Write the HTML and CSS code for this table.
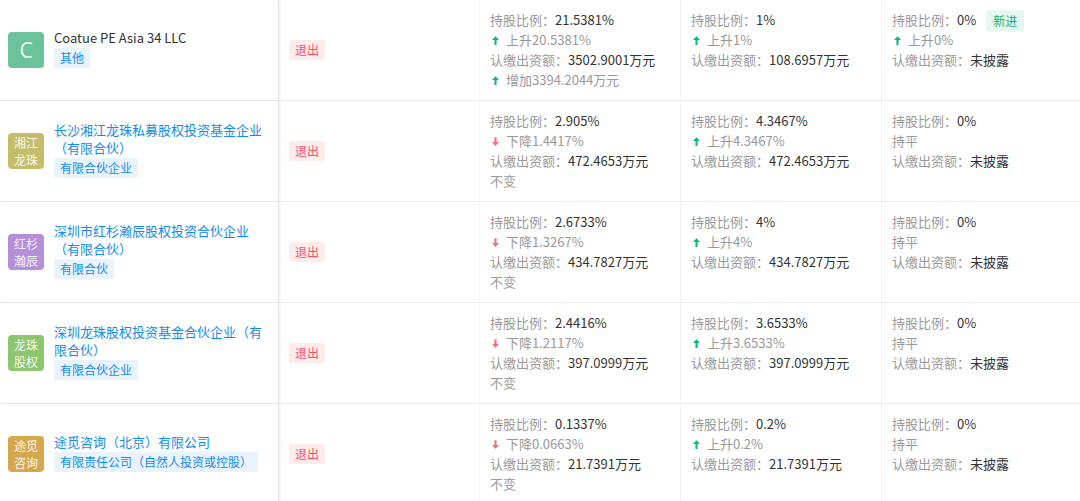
FILE: index.html
```html
<!DOCTYPE html>
<html lang="zh">
<head>
<meta charset="utf-8">
<link rel="stylesheet" href="styles.css">
</head>
<body>
<div class="table">

  <div class="row">
    <div class="cell name-cell">
      <div class="avatar av-c letter">C</div>
      <div class="name-info">
        <div class="name dark">Coatue PE Asia 34 LLC</div>
        <span class="tag">其他</span>
      </div>
    </div>
    <div class="cell status-cell"><span class="exit">退出</span></div>
    <div class="cell data">
      <div class="line"><span class="lbl">持股比例：</span><span class="val">21.5381%</span></div>
      <div class="line sub"><svg class="arr up" viewBox="0 0 8 10"><path d="M4 0 L8 4.5 H5.2 V10 H2.8 V4.5 H0 Z"/></svg>上升20.5381%</div>
      <div class="line"><span class="lbl">认缴出资额：</span><span class="val">3502.9001万元</span></div>
      <div class="line sub"><svg class="arr up" viewBox="0 0 8 10"><path d="M4 0 L8 4.5 H5.2 V10 H2.8 V4.5 H0 Z"/></svg>增加3394.2044万元</div>
    </div>
    <div class="cell data">
      <div class="line"><span class="lbl">持股比例：</span><span class="val">1%</span></div>
      <div class="line sub"><svg class="arr up" viewBox="0 0 8 10"><path d="M4 0 L8 4.5 H5.2 V10 H2.8 V4.5 H0 Z"/></svg>上升1%</div>
      <div class="line"><span class="lbl">认缴出资额：</span><span class="val">108.6957万元</span></div>
    </div>
    <div class="cell data">
      <div class="line"><span class="lbl">持股比例：</span><span class="val">0%</span><span class="new">新进</span></div>
      <div class="line sub"><svg class="arr up" viewBox="0 0 8 10"><path d="M4 0 L8 4.5 H5.2 V10 H2.8 V4.5 H0 Z"/></svg>上升0%</div>
      <div class="line"><span class="lbl">认缴出资额：</span><span class="val">未披露</span></div>
    </div>
  </div>

  <div class="row">
    <div class="cell name-cell">
      <div class="avatar av-olive"><span class="av-l">湘江</span><span class="av-l">龙珠</span></div>
      <div class="name-info">
        <div class="name">长沙湘江龙珠私募股权投资基金企业（有限合伙）</div>
        <span class="tag">有限合伙企业</span>
      </div>
    </div>
    <div class="cell status-cell"><span class="exit">退出</span></div>
    <div class="cell data">
      <div class="line"><span class="lbl">持股比例：</span><span class="val">2.905%</span></div>
      <div class="line sub"><svg class="arr down" viewBox="0 0 8 10"><path d="M4 10 L8 5.5 H5.2 V0 H2.8 V5.5 H0 Z"/></svg>下降1.4417%</div>
      <div class="line"><span class="lbl">认缴出资额：</span><span class="val">472.4653万元</span></div>
      <div class="line sub">不变</div>
    </div>
    <div class="cell data">
      <div class="line"><span class="lbl">持股比例：</span><span class="val">4.3467%</span></div>
      <div class="line sub"><svg class="arr up" viewBox="0 0 8 10"><path d="M4 0 L8 4.5 H5.2 V10 H2.8 V4.5 H0 Z"/></svg>上升4.3467%</div>
      <div class="line"><span class="lbl">认缴出资额：</span><span class="val">472.4653万元</span></div>
    </div>
    <div class="cell data">
      <div class="line"><span class="lbl">持股比例：</span><span class="val">0%</span></div>
      <div class="line sub">持平</div>
      <div class="line"><span class="lbl">认缴出资额：</span><span class="val">未披露</span></div>
    </div>
  </div>

  <div class="row">
    <div class="cell name-cell">
      <div class="avatar av-purple"><span class="av-l">红杉</span><span class="av-l">瀚辰</span></div>
      <div class="name-info">
        <div class="name">深圳市红杉瀚辰股权投资合伙企业（有限合伙）</div>
        <span class="tag">有限合伙</span>
      </div>
    </div>
    <div class="cell status-cell"><span class="exit">退出</span></div>
    <div class="cell data">
      <div class="line"><span class="lbl">持股比例：</span><span class="val">2.6733%</span></div>
      <div class="line sub"><svg class="arr down" viewBox="0 0 8 10"><path d="M4 10 L8 5.5 H5.2 V0 H2.8 V5.5 H0 Z"/></svg>下降1.3267%</div>
      <div class="line"><span class="lbl">认缴出资额：</span><span class="val">434.7827万元</span></div>
      <div class="line sub">不变</div>
    </div>
    <div class="cell data">
      <div class="line"><span class="lbl">持股比例：</span><span class="val">4%</span></div>
      <div class="line sub"><svg class="arr up" viewBox="0 0 8 10"><path d="M4 0 L8 4.5 H5.2 V10 H2.8 V4.5 H0 Z"/></svg>上升4%</div>
      <div class="line"><span class="lbl">认缴出资额：</span><span class="val">434.7827万元</span></div>
    </div>
    <div class="cell data">
      <div class="line"><span class="lbl">持股比例：</span><span class="val">0%</span></div>
      <div class="line sub">持平</div>
      <div class="line"><span class="lbl">认缴出资额：</span><span class="val">未披露</span></div>
    </div>
  </div>

  <div class="row">
    <div class="cell name-cell">
      <div class="avatar av-green"><span class="av-l">龙珠</span><span class="av-l">股权</span></div>
      <div class="name-info">
        <div class="name">深圳龙珠股权投资基金合伙企业（有限合伙）</div>
        <span class="tag">有限合伙企业</span>
      </div>
    </div>
    <div class="cell status-cell"><span class="exit">退出</span></div>
    <div class="cell data">
      <div class="line"><span class="lbl">持股比例：</span><span class="val">2.4416%</span></div>
      <div class="line sub"><svg class="arr down" viewBox="0 0 8 10"><path d="M4 10 L8 5.5 H5.2 V0 H2.8 V5.5 H0 Z"/></svg>下降1.2117%</div>
      <div class="line"><span class="lbl">认缴出资额：</span><span class="val">397.0999万元</span></div>
      <div class="line sub">不变</div>
    </div>
    <div class="cell data">
      <div class="line"><span class="lbl">持股比例：</span><span class="val">3.6533%</span></div>
      <div class="line sub"><svg class="arr up" viewBox="0 0 8 10"><path d="M4 0 L8 4.5 H5.2 V10 H2.8 V4.5 H0 Z"/></svg>上升3.6533%</div>
      <div class="line"><span class="lbl">认缴出资额：</span><span class="val">397.0999万元</span></div>
    </div>
    <div class="cell data">
      <div class="line"><span class="lbl">持股比例：</span><span class="val">0%</span></div>
      <div class="line sub">持平</div>
      <div class="line"><span class="lbl">认缴出资额：</span><span class="val">未披露</span></div>
    </div>
  </div>

  <div class="row">
    <div class="cell name-cell">
      <div class="avatar av-gold"><span class="av-l">途觅</span><span class="av-l">咨询</span></div>
      <div class="name-info">
        <div class="name">途觅咨询（北京）有限公司</div>
        <span class="tag">有限责任公司（自然人投资或控股）</span>
      </div>
    </div>
    <div class="cell status-cell"><span class="exit">退出</span></div>
    <div class="cell data">
      <div class="line"><span class="lbl">持股比例：</span><span class="val">0.1337%</span></div>
      <div class="line sub"><svg class="arr down" viewBox="0 0 8 10"><path d="M4 10 L8 5.5 H5.2 V0 H2.8 V5.5 H0 Z"/></svg>下降0.0663%</div>
      <div class="line"><span class="lbl">认缴出资额：</span><span class="val">21.7391万元</span></div>
      <div class="line sub">不变</div>
    </div>
    <div class="cell data">
      <div class="line"><span class="lbl">持股比例：</span><span class="val">0.2%</span></div>
      <div class="line sub"><svg class="arr up" viewBox="0 0 8 10"><path d="M4 0 L8 4.5 H5.2 V10 H2.8 V4.5 H0 Z"/></svg>上升0.2%</div>
      <div class="line"><span class="lbl">认缴出资额：</span><span class="val">21.7391万元</span></div>
    </div>
    <div class="cell data">
      <div class="line"><span class="lbl">持股比例：</span><span class="val">0%</span></div>
      <div class="line sub">持平</div>
      <div class="line"><span class="lbl">认缴出资额：</span><span class="val">未披露</span></div>
    </div>
  </div>

</div>
</body>
</html>
```

FILE: styles.css
```css
html, body {
  margin: 0;
  padding: 0;
  background: #fff;
  overflow: hidden;
}
body {
  font-family: "Noto Sans CJK SC", "Microsoft YaHei", sans-serif;
  font-size: 13px;
  color: #333;
  width: 1080px;
}
.table {
  display: flex;
  flex-direction: column;
  width: 1084px;
}
.row {
  display: flex;
  border-bottom: 1px solid #eeeeee;
  height: 100px;
}
.cell {
  box-sizing: border-box;
  flex: none;
}
.name-cell {
  width: 279px;
  display: flex;
  align-items: center;
  padding: 0 10px 0 8px;
  gap: 10px;
  border-right: 1px solid #e3e3e3;
  box-shadow: 2px 0 3px rgba(0, 0, 0, 0.05);
  position: relative;
  z-index: 1;
  background: #fff;
}
.avatar {
  flex: none;
  width: 36px;
  height: 36px;
  border-radius: 4px;
  color: rgba(255, 255, 255, 0.92);
  font-size: 12px;
  text-align: center;
  display: flex;
  flex-direction: column;
  align-items: center;
  justify-content: center;
}
.av-l {
  display: block;
  height: 17.5px;
  line-height: 17.5px;
}
.avatar.letter {
  font-size: 21px;
  line-height: 36px;
  font-family: "Open Sans", sans-serif;
}
.av-c { background: #6cc29b; }
.av-olive { background: #c5bd6c; }
.av-purple { background: #b58fd8; }
.av-green { background: #8ec66e; }
.av-gold { background: #d6a84e; }

.name-info {
  width: 215px;
  display: flex;
  flex-direction: column;
  align-items: flex-start;
  gap: 1px;
  margin-bottom: 4px;
}
.name {
  font-size: 13px;
  line-height: 18px;
  color: #128bed;
}
.name.dark {
  color: #333;
}
.tag {
  display: inline-block;
  background: #e9f3fd;
  color: #128bed;
  font-size: 12px;
  line-height: 20px;
  height: 20px;
  padding: 0 6px;
  border-radius: 2px;
}
.status-cell {
  width: 201px;
  display: flex;
  align-items: center;
  padding-left: 10px;
  border-right: 1px solid #f6f6f6;
}
.exit {
  display: inline-block;
  background: #feeceb;
  color: #f5506a;
  font-size: 12px;
  line-height: 20px;
  padding: 0 6px;
  border-radius: 2px;
}
.data {
  width: 201px;
  padding: 10px 0 10px 10px;
  border-right: 1px solid #f2f2f2;
  display: flex;
  flex-direction: column;
}
.line {
  line-height: 20px;
  height: 20px;
  white-space: nowrap;
  display: flex;
  align-items: center;
}
.lbl {
  color: #999;
}
.val {
  color: #333;
}
.sub {
  color: #999;
}
.arr {
  width: 7px;
  height: 9px;
  margin: 0 7px 0 2px;
  flex: none;
}
.arr.up { fill: #12b37c; }
.arr.down { fill: #f66b7e; }
.new {
  display: inline-block;
  margin-left: 10px;
  background: #e6f7ef;
  color: #1aaf6c;
  font-size: 12px;
  line-height: 21px;
  height: 21px;
  padding: 0 7px;
  border-radius: 2px;
}
```
